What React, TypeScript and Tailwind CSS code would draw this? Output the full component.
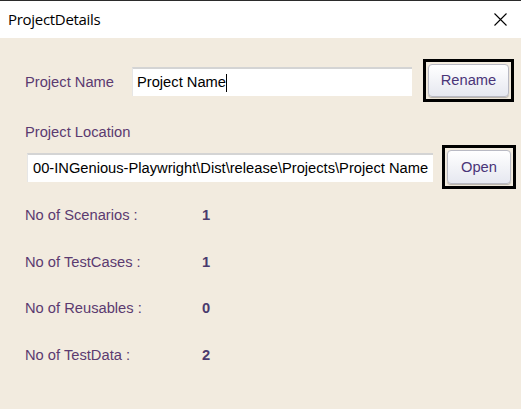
const stats = [
  { label: "No of Scenarios :", value: "1" },
  { label: "No of TestCases :", value: "1" },
  { label: "No of Reusables :", value: "0" },
  { label: "No of TestData :", value: "2" },
];

const ActionButton = ({ label, boxClass }: { label: string; boxClass: string }) => (
  <div className={`border-[3px] border-black p-[2px] flex ${boxClass}`}>
    <button className="flex-1 rounded-[4px] border border-[#b9bac4] bg-gradient-to-b from-white to-[#e6e8f0] shadow-[0_1px_1px_rgba(0,0,0,0.25)] text-[14.7px] text-[#4a3578] flex items-center justify-center">
      {label}
    </button>
  </div>
);

const App = () => {
  return (
    <div className="w-[521px] h-[409px] bg-[#f2ebdf] flex flex-col overflow-hidden font-['Liberation_Sans',Arial,sans-serif]">
      <div className="h-[38px] bg-white border-t border-[#2b2b2b] flex items-center justify-between pl-[8px] pr-[14px]">
        <span className="text-[15px] text-black font-['Open_Sans','Noto_Sans',sans-serif] tracking-[-0.3px]">
          ProjectDetails
        </span>
        <svg width="13" height="13" viewBox="0 0 13 13" className="text-black">
          <path d="M0.5 0.5 L12.5 12.5 M12.5 0.5 L0.5 12.5" stroke="currentColor" strokeWidth="1.1" />
        </svg>
      </div>

      <div className="flex flex-col pl-[25px] pt-[21px]">
        <div className="flex items-center h-[43px]">
          <span className="w-[107px] text-[14.7px] text-[#5b3a70] mt-[4px]">Project Name</span>
          <div className="w-[280px] h-[29px] bg-white border-t-2 border-l border-t-[#d4d4d4] border-l-[#e6e6e6] flex items-center pl-[4px] mt-[2px]">
            <span className="text-[14.7px] text-black">Project Name</span>
            <span className="w-px h-[18px] bg-black" />
          </div>
          <ActionButton label="Rename" boxClass="ml-[11px] w-[91px] h-[43px]" />
        </div>

        <span className="mt-[22px] h-[16px] leading-[16px] text-[14.7px] text-[#5b3a70]">Project Location</span>

        <div className="flex items-center h-[44px] mt-[5px]">
          <div className="ml-[2px] w-[406px] h-[29px] bg-white border-t-2 border-l border-t-[#d4d4d4] border-l-[#e6e6e6] flex items-center pl-[5px] overflow-hidden whitespace-nowrap">
            <span className="text-[14.7px] text-black">
              00-INGenious-Playwright\Dist\release\Projects\Project Name
            </span>
          </div>
          <ActionButton label="Open" boxClass="ml-[9px] w-[74px] h-[44px]" />
        </div>

        <div className="flex flex-col mt-[3px]">
          {stats.map((s) => (
            <div key={s.label} className="flex items-center h-[46.5px]">
              <span className="w-[177px] text-[14.7px] text-[#5b3a70]">{s.label}</span>
              <span className="text-[14.7px] font-bold text-[#4a3a6e]">{s.value}</span>
            </div>
          ))}
        </div>
      </div>
    </div>
  );
};

export default App;
